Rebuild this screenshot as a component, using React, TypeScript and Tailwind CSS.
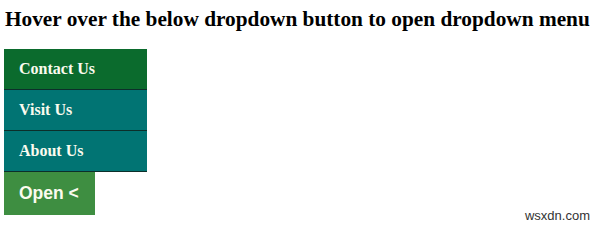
const items = [
  { label: "Contact Us", bg: "bg-[#0b6b2d]" },
  { label: "Visit Us", bg: "bg-[#017473]" },
  { label: "About Us", bg: "bg-[#017473]" },
];

export default function App() {
  return (
    <div className="relative h-[232px] w-[600px] overflow-hidden bg-white font-['Liberation_Serif',serif]">
      <h3 className="pl-[5px] pt-[7px] text-[21.3px] font-bold leading-[25px] text-black">
        Hover over the below dropdown button to open dropdown menu
      </h3>
      <div className="ml-[4px] mt-[17px] flex flex-col">
        <div className="flex w-[143px] flex-col">
          {items.map((item) => (
            <div
              key={item.label}
              className={`${item.bg} h-[41px] border-b border-[#0c2f2a] pl-[15px] text-[16px] font-bold leading-[40px] text-[#fbfbef]`}
            >
              {item.label}
            </div>
          ))}
        </div>
        <button className="h-[43px] w-[91px] bg-[#3e8e41] pl-[15px] text-left font-['Liberation_Sans',sans-serif] text-[17.5px] font-bold text-[#fbfbef]">
          Open &lt;
        </button>
      </div>
      <span className="absolute bottom-[7px] right-[10px] font-['Liberation_Sans',sans-serif] text-[13px] text-[#333]">
        wsxdn.com
      </span>
    </div>
  );
}
